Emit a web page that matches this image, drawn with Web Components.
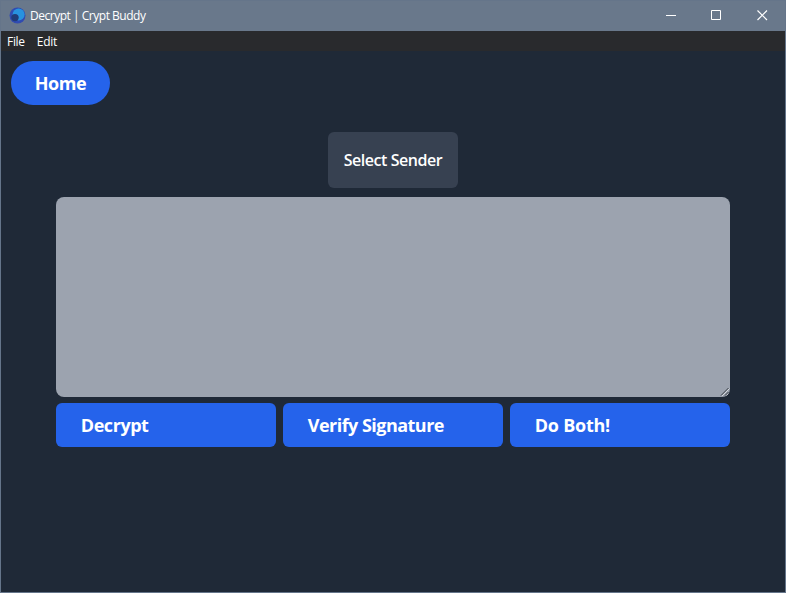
<!DOCTYPE html>
<html lang="en">
<head>
<meta charset="utf-8">
<title>Decrypt | Crypt Buddy</title>
<style>
html,body{margin:0;height:100%;overflow:hidden;background:#1f2937}
body{font-family:"Open Sans","Noto Sans",sans-serif;color:#fff}
</style>
</head>
<body>
<app-window>
  <title-bar slot="title">Decrypt | Crypt Buddy</title-bar>
  <menu-bar slot="menu"><span>File</span><span>Edit</span></menu-bar>
  <pill-button>Home</pill-button>
  <crypt-panel>
    <sender-button slot="sender">Select Sender</sender-button>
    <message-box slot="message"></message-box>
    <action-button style="letter-spacing:-.45px">Decrypt</action-button>
    <action-button style="letter-spacing:-.53px">Verify Signature</action-button>
    <action-button style="letter-spacing:-.25px">Do Both!</action-button>
  </crypt-panel>
</app-window>
<script>
const define = (name, html) => {
  const template = document.createElement('template');
  template.innerHTML = html;
  customElements.define(name, class extends HTMLElement {
    constructor() {
      super();
      this.attachShadow({ mode: 'open' }).append(template.content.cloneNode(true));
    }
  });
};

define('app-window', `<style>
:host{display:flex;flex-direction:column;box-sizing:border-box;width:786px;height:593px;border:1px solid #65758a;background:#1f2937}
main{flex:1;padding:10px}
</style><slot name="title"></slot><slot name="menu"></slot><main><slot></slot></main>`);

define('title-bar', `<style>
:host{display:flex;align-items:center;height:30px;background:#69788b;font-size:12px;line-height:16px;letter-spacing:-.48px}
.logo{width:17px;height:17px;margin:-2px 4px 0 8px}
.name{flex:1;white-space:nowrap}
.control{width:46px;height:30px;display:block}
.controls{display:flex;margin-right:-1px}
</style>
<svg class="logo" viewBox="0 0 17 17"><circle cx="8.5" cy="8.5" r="8" fill="#304bb1"/><circle cx="9.6" cy="7.6" r="6" fill="#2892df"/><circle cx="6" cy="10.6" r="3.7" fill="#203c78"/></svg>
<span class="name"><slot></slot></span>
<div class="controls">
<svg class="control" viewBox="0 0 46 30"><path d="M18 14.5h10" stroke="#fff"/></svg>
<svg class="control" viewBox="0 0 46 30"><path d="M17.5 9.5h9v9h-9z" fill="none" stroke="#fff"/></svg>
<svg class="control" viewBox="0 0 46 30"><path d="M17.5 9.5l9.5 9.5M27 9.5l-9.5 9.5" stroke="#fff" stroke-width="1.2"/></svg>
</div>`);

define('menu-bar', `<style>
:host{display:flex;gap:12px;height:20px;padding-left:6px;background:#292a2d;font-size:12px;line-height:21px;letter-spacing:-.3px}
</style><slot></slot>`);

define('pill-button', `<style>
:host{display:flex;align-items:center;justify-content:center;width:99px;height:44px;border-radius:22px;background:#2563eb;font-size:18px;font-weight:700;line-height:28px;letter-spacing:-.45px}
</style><slot></slot>`);

define('crypt-panel', `<style>
:host{display:flex;flex-direction:column;align-items:center;width:673.4px;margin:27px auto 0}
.actions{display:grid;grid-template-columns:repeat(3,1fr);gap:7.6px;width:100%;margin-top:6px}
</style><slot name="sender"></slot><slot name="message"></slot><div class="actions"><slot></slot></div>`);

define('sender-button', `<style>
:host{display:flex;align-items:center;justify-content:center;width:130px;height:56px;border-radius:6px;background:#374151;font-size:16px;font-weight:600;line-height:24px;letter-spacing:-.45px;white-space:nowrap}
</style><slot></slot>`);

define('message-box', `<style>
:host{display:block;width:100%;height:200px;margin-top:9px}
.field{display:flex;align-items:flex-end;justify-content:flex-end;height:100%;border-radius:8px;background:#9ca3af;overflow:hidden}
svg{display:block;width:10px;height:10px}
</style><div class="field" role="textbox"><svg viewBox="0 0 10 10"><path d="M1 8.5L8.5 1M5 8.5L8.5 5" stroke="#343a43"/><path d="M2 9L9.5 1.5M6 9L9.5 5.5" stroke="#e5e7eb" stroke-width=".8"/></svg></div>`);

define('action-button', `<style>
:host{display:flex;align-items:center;box-sizing:border-box;height:44px;padding:0 24.5px;border-radius:6px;background:#2563eb;font-size:18px;font-weight:700;line-height:28px;white-space:nowrap}
</style><slot></slot>`);
</script>
</body>
</html>
